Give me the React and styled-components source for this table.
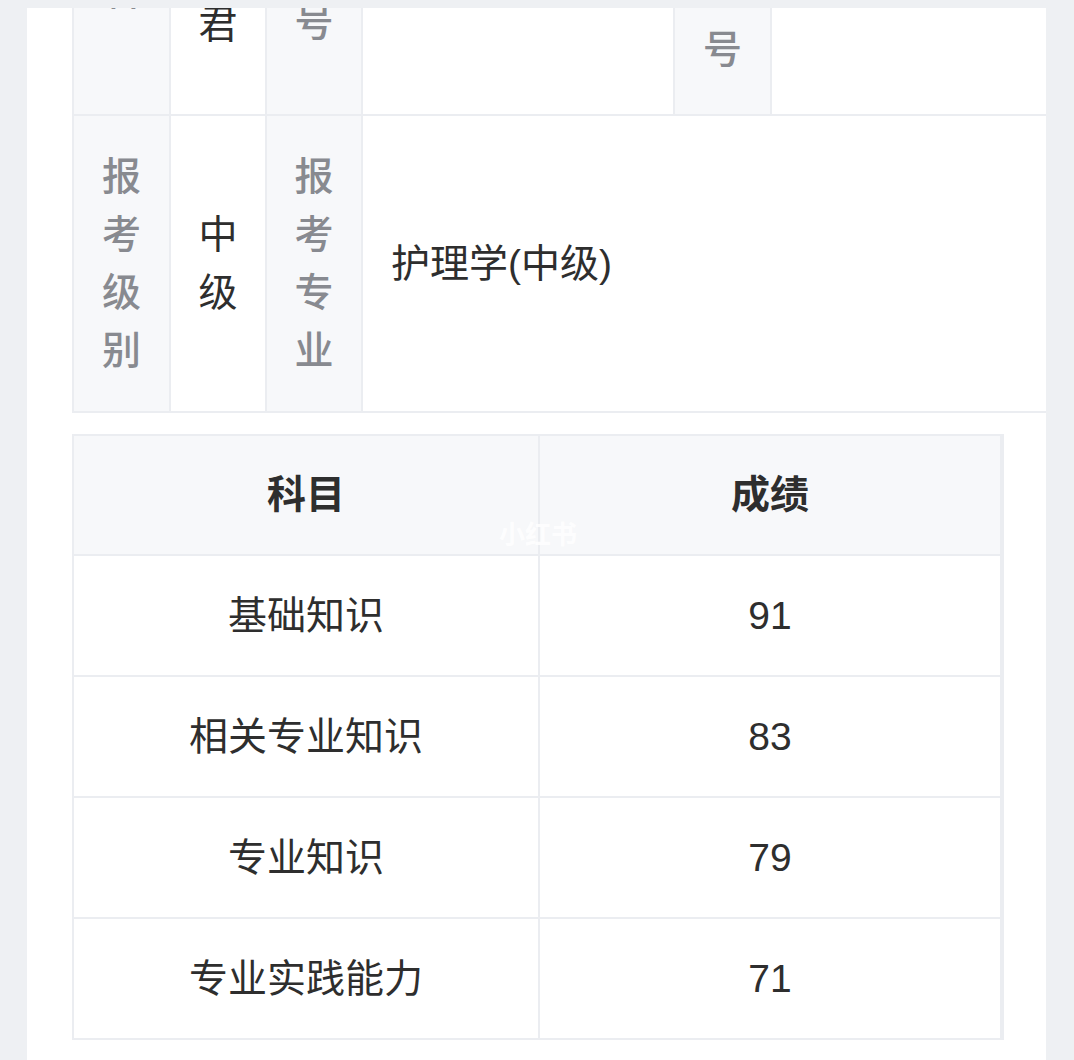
import React from "react";
import styled, { createGlobalStyle } from "styled-components";

const Global = createGlobalStyle`
  html, body { margin: 0; padding: 0; background: #eef0f3; }
  body { font-family: "Liberation Sans", "Noto Sans CJK SC", sans-serif; }
`;

const Page = styled.div`
  padding: 8px 28px 0 27px;
  height: 1060px;
  box-sizing: border-box;
  overflow: hidden;
`;

const Card = styled.div`
  position: relative;
  background: #ffffff;
  height: 1052px;
  overflow: hidden;
  padding-left: 45px;
  box-sizing: border-box;
`;

const InfoGrid = styled.div`
  display: grid;
  width: max-content;
  grid-template-columns: 95px 94px 94px 310px 95px 330px;
  grid-auto-rows: 295px;
  gap: 2px;
  background: #ebedf1;
  border-left: 2px solid #ebedf1;
  border-bottom: 2px solid #ebedf1;
  margin-top: -189px;
`;

const Cell = styled.div`
  display: flex;
  align-items: center;
  justify-content: ${(p) => (p.$left ? "flex-start" : "center")};
  text-align: ${(p) => (p.$left ? "left" : "center")};
  padding: 0 ${(p) => (p.$left ? "28px" : "20px")};
  padding-bottom: ${(p) => p.$lift || 0}px;
  background: ${(p) => (p.$label ? "#f7f8fa" : "#ffffff")};
  color: ${(p) => (p.$label ? "#888a90" : "#2e2e2e")};
  font-weight: ${(p) => (p.$label ? 500 : 400)};
  font-size: 39px;
  line-height: 58px;
  box-sizing: border-box;
`;

const ScoreGrid = styled.div`
  display: grid;
  width: 928px;
  grid-template-columns: 464px 460px;
  grid-template-rows: 118px;
  grid-auto-rows: 119px;
  gap: 2px;
  background: #ebedf1;
  border: 2px solid #ebedf1;
  margin-top: 21px;
`;

const ScoreCell = styled.div`
  display: flex;
  align-items: center;
  justify-content: center;
  background: ${(p) => (p.$head ? "#f7f8fa" : "#ffffff")};
  color: #2e2e2e;
  font-weight: ${(p) => (p.$head ? 700 : 400)};
  font-size: 39px;
  line-height: 58px;
`;

const Watermark = styled.div`
  position: absolute;
  left: 472px;
  top: 506px;
  color: #ffffff;
  opacity: 0.85;
  font-size: 26px;
  font-weight: 700;
  font-family: "Noto Sans CJK SC", sans-serif;
  pointer-events: none;
`;

const scores = [
  ["基础知识", "91"],
  ["相关专业知识", "83"],
  ["专业知识", "79"],
  ["专业实践能力", "71"],
];

export default function App() {
  return (
    <>
      <Global />
      <Page>
        <Card>
          <InfoGrid>
            <Cell $label $lift={8}>姓名</Cell>
            <Cell>李小君</Cell>
            <Cell $label $lift={4}>档案号</Cell>
            <Cell $left></Cell>
            <Cell $label $lift={8}>准考证号</Cell>
            <Cell $left></Cell>

            <Cell $label>报考级别</Cell>
            <Cell>中级</Cell>
            <Cell $label>报考专业</Cell>
            <Cell $left style={{ gridColumn: "span 3" }}>护理学(中级)</Cell>
          </InfoGrid>

          <ScoreGrid>
            <ScoreCell $head>科目</ScoreCell>
            <ScoreCell $head>成绩</ScoreCell>
            {scores.map(([s, v]) => (
              <React.Fragment key={s}>
                <ScoreCell>{s}</ScoreCell>
                <ScoreCell>{v}</ScoreCell>
              </React.Fragment>
            ))}
          </ScoreGrid>
          <Watermark>小红书</Watermark>
        </Card>
      </Page>
    </>
  );
}
